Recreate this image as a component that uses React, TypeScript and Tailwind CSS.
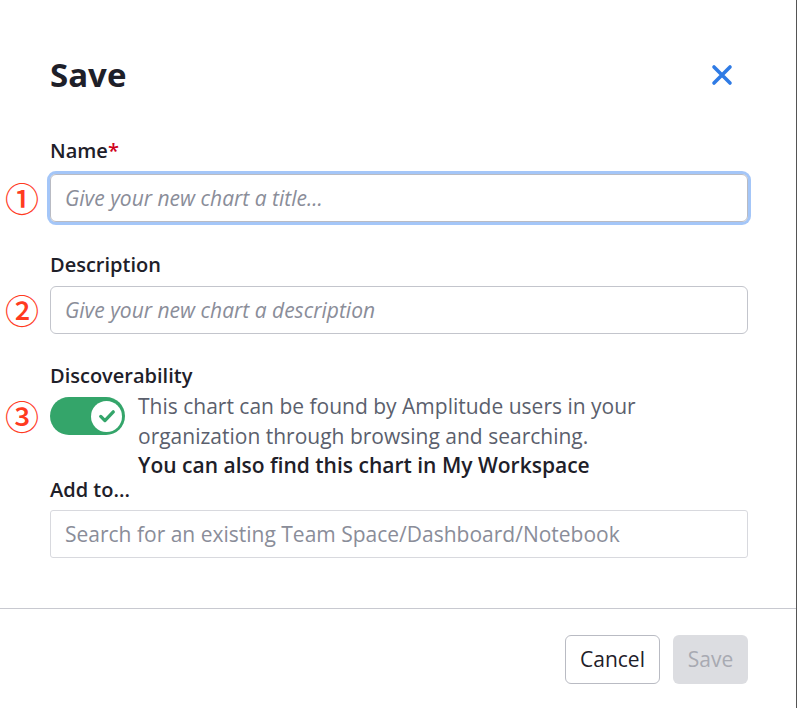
const font = { fontFamily: '"Open Sans", "Noto Sans", Arial, sans-serif' };
const markFont = { fontFamily: '"Noto Sans CJK JP", "Noto Sans", sans-serif' };

function Marker({ n }: { n: string }) {
  return (
    <span
      className="absolute left-[-45px] top-1/2 -translate-y-1/2 text-[34px] leading-none font-medium text-[#ff3b1f]"
      style={markFont}
    >
      {n}
    </span>
  );
}

export default function App() {
  return (
    <div className="w-[800px] h-[708px] bg-white flex" style={font}>
      <div className="w-[797px] h-full border-r border-[#555] flex flex-col">
        {/* body */}
        <div className="pl-[50px] pr-[48px] pt-[55px] h-[608px]">
          <div className="flex items-center justify-between h-[40px]">
            <h2 className="text-[33px] font-bold text-[#1e2029] leading-[40px]">Save</h2>
            <button className="mr-[15px] text-[#2f7be5]">
              <svg width="22" height="22" viewBox="0 0 22 22" fill="none" stroke="currentColor" strokeWidth="3.6" strokeLinecap="round">
                <path d="M3 3l16 16M19 3L3 19" />
              </svg>
            </button>
          </div>

          <label className="block mt-[44px] text-[20px] leading-[24px] font-semibold text-[#1e2029]">
            Name<span className="text-[#d0021b]">*</span>
          </label>
          <div className="relative mt-[11px]">
            <Marker n="①" />
            <input
              className="w-full h-[48px] rounded-[6px] border border-[#b9bbc3] px-[14px] text-[21px] italic text-[#1e2029] placeholder-[#8a8d99] outline-none ring-[3px] ring-[#a4c6f8]"
              placeholder="Give your new chart a title..."
            />
          </div>

          <label className="block mt-[31px] text-[20px] leading-[24px] font-semibold text-[#1e2029]">
            Description
          </label>
          <div className="relative mt-[9px]">
            <Marker n="②" />
            <input
              className="w-full h-[48px] rounded-[6px] border border-[#c3c5cc] px-[14px] text-[21px] italic text-[#1e2029] placeholder-[#8a8d99] outline-none"
              placeholder="Give your new chart a description"
            />
          </div>

          <label className="block mt-[30px] text-[20px] leading-[24px] font-semibold text-[#1e2029]">
            Discoverability
          </label>
          <div className="relative mt-[3px] flex items-start gap-[13px]">
            <span
              className="absolute left-[-45px] top-[8px] text-[34px] leading-none font-medium text-[#ff3b1f]"
              style={markFont}
            >
              ③
            </span>
            <div className="mt-[6px] w-[75px] h-[38px] shrink-0 rounded-full bg-[#34a56a] flex items-center justify-end pr-[3px]">
              <div className="w-[31px] h-[31px] rounded-full bg-white flex items-center justify-center">
                <svg width="20" height="20" viewBox="0 0 24 24" fill="none" stroke="#34a56a" strokeWidth="4" strokeLinecap="round" strokeLinejoin="round">
                  <path d="M4.5 12.5l5 5L19.5 7" />
                </svg>
              </div>
            </div>
            <div className="text-[21px] pr-[80px]">
              <p className="leading-[30px] text-[#5b5f6d]">
                This chart can be found by Amplitude users in your organization through browsing and searching.
              </p>
              <p className="leading-[28px] font-semibold text-[#1e2029] whitespace-nowrap">
                You can also find this chart in My Workspace
              </p>
            </div>
          </div>

          <label className="block mt-[-1px] text-[20px] leading-[24px] font-semibold text-[#1e2029]">
            Add to...
          </label>
          <input
            className="mt-[8px] w-full h-[48px] rounded-[3px] border border-[#d8d9de] px-[14px] text-[21px] text-[#1e2029] placeholder-[#8a8d99] outline-none"
            placeholder="Search for an existing Team Space/Dashboard/Notebook"
          />
        </div>

        {/* footer */}
        <div className="border-t border-[#c8c9d0] pt-[26px] pr-[48px] flex justify-end gap-[13px]">
          <button className="h-[49px] w-[95px] rounded-[6px] border border-[#b9bbc3] bg-white text-[21px] text-[#1e2029]">
            Cancel
          </button>
          <button disabled className="h-[49px] w-[75px] rounded-[6px] bg-[#dcdde1] text-[21px] text-[#a8aab2]">
            Save
          </button>
        </div>
      </div>
    </div>
  );
}
